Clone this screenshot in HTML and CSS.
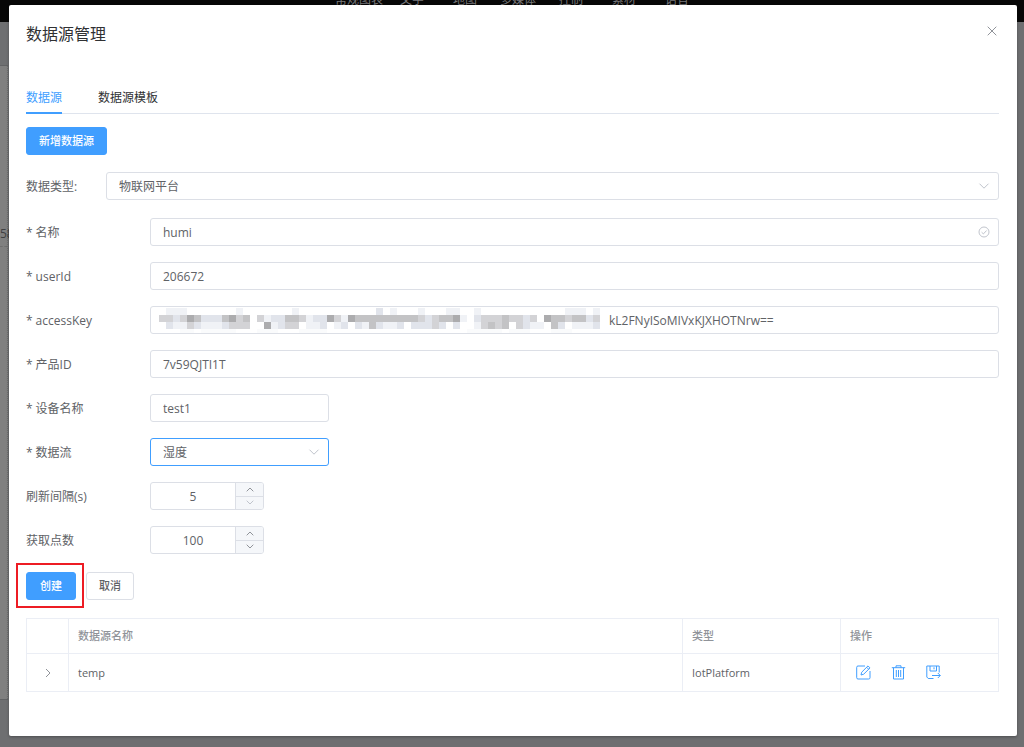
FILE: index.html
```html
<!DOCTYPE html>
<html lang="zh-CN">
<head>
<meta charset="utf-8">
<title>数据源管理</title>
<link rel="stylesheet" href="styles.css">
</head>
<body>
<div class="workspace" aria-hidden="true">
  <div class="topbar">
    <span>常规图表</span><span>文字</span><span>地图</span><span>多媒体</span><span>控制</span><span>素材</span><span>语音</span>
  </div>
  <div class="canvas">
    <div class="canvas-head"></div>
    <div class="canvas-body"><span class="canvas-value">58</span></div>
    <div class="canvas-foot"></div>
  </div>
</div>

<main class="dialog" role="dialog" aria-labelledby="dialog-title">
  <header class="dialog-header">
    <h1 class="dialog-title" id="dialog-title">数据源管理</h1>
    <button class="close" type="button" aria-label="关闭">
      <svg viewBox="0 0 10 10" width="10" height="10"><path d="M.7.7l8.6 8.6M9.3.7L.7 9.3"/></svg>
    </button>
  </header>

  <nav class="tabs">
    <button class="tab tab-active" type="button">数据源</button>
    <button class="tab" type="button">数据源模板</button>
  </nav>

  <button class="btn btn-primary" type="button">新增数据源</button>

  <form class="form">
    <div class="row row-type">
      <label for="type">数据类型:</label>
      <div class="field">
        <select id="type"><option>物联网平台</option></select>
        <svg class="field-icon" viewBox="0 0 12 12" width="12" height="12"><path d="M1.5 3.7L6 8.2l4.500-4.500"/></svg>
      </div>
    </div>
    <div class="row">
      <label class="required" for="name">名称</label>
      <div class="field">
        <input id="name" type="text" value="humi">
        <svg class="field-icon" viewBox="0 0 12 12" width="12" height="12"><circle cx="6" cy="6" r="5"/><path d="M3.600 6.200l1.800 1.700 3.200-3.400"/></svg>
      </div>
    </div>
    <div class="row">
      <label class="required" for="user">userId</label>
      <div class="field"><input id="user" type="text" value="206672"></div>
    </div>
    <div class="row">
      <label class="required" for="key">accessKey</label>
      <div class="field field-key">
        <svg class="mosaic" viewBox="0 0 64 4" width="448" height="28" preserveAspectRatio="none">
          <path stroke="#f0f2f6" d="M1 .5h3M11 .5h1M19 .5h1M33 .5h1M37 .5h1M41 .5h2M45 .5h1M58 .5h3M62 .5h1M15 1.500h1M21 1.500h1M26 1.500h1M43 1.500h1M2 2.500h2M6 2.500h3M15 2.500h2M21 2.500h3M25 2.500h1M28 2.500h2M32 2.500h3M45 2.500h2M53 2.500h2M56 2.500h1M59 2.500h4"/>
          <path stroke="#fafbfc" d="M3 3.500h2M6 3.500h5M14 3.500h3M20 3.500h4M44 3.500h5M50 3.500h3M56 3.500h3"/>
          <path stroke="#e1e4eb" d="M31 .5h1M2 1.500h1M6 1.500h3M16 1.500h2M22 1.500h2M38 1.500h1M45 1.500h1M52 1.500h1M61 1.500h1M1 2.500h1M5 2.500h1M9 2.500h1M17 2.500h1M23 2.500h1M26 2.500h1M28 2.500h1M31 2.500h1M34 2.500h1M36 2.500h3M40 2.500h1M42 2.500h1M52 2.500h1M57 2.500h1M62 2.500h1"/>
          <path stroke="#d3d3d6" d="M0 1.500h2M3 1.500h1M11 1.500h1M14 1.500h1M20 1.500h1M25 1.500h1M37 1.500h1M39 1.500h1M46 1.500h3M50 1.500h2M53 1.500h1M58 1.500h1M62 1.500h1M4 2.500h1M10 2.500h3M18 2.500h2M39 2.500h1M46 2.500h1M48 2.500h1M51 2.500h1"/>
          <path stroke="#c3c3c5" d="M5 1.500h1M9 1.500h1M12 1.500h1M18 1.500h2M28 1.500h9M40 1.500h2M49 1.500h1M56 1.500h2M59 1.500h2M30 2.500h1M47 2.500h1M49 2.500h1M56 2.500h1"/>
          <path stroke="#acacae" d="M4 1.500h1M10 1.500h1M24 1.500h1M27 1.500h1M42 1.500h1M55 1.500h1M15 2.500h1"/>
        </svg>
        <input id="key" type="text" value="kL2FNyISoMIVxKJXHOTNrw==">
      </div>
    </div>
    <div class="row">
      <label class="required" for="product">产品ID</label>
      <div class="field"><input id="product" type="text" value="7v59QJTI1T"></div>
    </div>
    <div class="row">
      <label class="required" for="device">设备名称</label>
      <div class="field field-short"><input id="device" type="text" value="test1"></div>
    </div>
    <div class="row">
      <label class="required" for="stream">数据流</label>
      <div class="field field-short field-focus">
        <select id="stream"><option>湿度</option></select>
        <svg class="field-icon" viewBox="0 0 12 12" width="12" height="12"><path d="M1.500 3.700L6 8.200l4.500-4.500"/></svg>
      </div>
    </div>
    <div class="row">
      <label for="interval">刷新间隔(s)</label>
      <div class="field stepper">
        <input id="interval" type="text" inputmode="numeric" value="5">
        <div class="steps">
          <button type="button" aria-label="增加"><svg viewBox="0 0 8 5" width="8" height="5"><path d="M.7 4.300L4 1l3.300 3.300"/></svg></button>
          <button type="button" aria-label="减少" disabled><svg viewBox="0 0 8 5" width="8" height="5"><path d="M.7.7L4 4 7.300.7"/></svg></button>
        </div>
      </div>
    </div>
    <div class="row">
      <label for="points">获取点数</label>
      <div class="field stepper">
        <input id="points" type="text" inputmode="numeric" value="100">
        <div class="steps">
          <button type="button" aria-label="增加"><svg viewBox="0 0 8 5" width="8" height="5"><path d="M.7 4.300L4 1l3.300 3.300"/></svg></button>
          <button type="button" aria-label="减少"><svg viewBox="0 0 8 5" width="8" height="5"><path d="M.7.7L4 4 7.300.7"/></svg></button>
        </div>
      </div>
    </div>
    <div class="actions">
      <div class="highlight"><button class="btn btn-primary" type="button">创建</button></div>
      <button class="btn" type="button">取消</button>
    </div>
  </form>

  <table class="sources">
    <colgroup><col class="col-expand"><col><col class="col-type"><col class="col-ops"></colgroup>
    <thead>
      <tr><th></th><th>数据源名称</th><th>类型</th><th>操作</th></tr>
    </thead>
    <tbody>
      <tr>
        <td class="expand"><button type="button" aria-label="展开"><svg viewBox="0 0 6 10" width="6" height="10"><path d="M1 1l4 4-4 4"/></svg></button></td>
        <td>temp</td>
        <td>IotPlatform</td>
        <td>
          <div class="ops">
            <button type="button" aria-label="编辑"><svg viewBox="0 0 15 15" width="15" height="15"><path d="M9 1H2Q.7 1 .7 2.300v10.400Q.7 14 2 14h10.700q1.300 0 1.300-1.300V6M5 10l.7-2.800L12 .9l2 2-6.300 6.300zM10.700 2.300l2 2"/></svg></button>
            <button type="button" aria-label="删除"><svg viewBox="0 0 15 15" width="15" height="15"><path d="M.8 2.700h13.400M5 2.700V.8h5v1.900M2.500 2.700V14h10V2.700M5.300 5v7M7.500 5v7M9.700 5v7"/></svg></button>
            <button type="button" aria-label="导出"><svg viewBox="0 0 15 15" width="15" height="15"><path d="M7.500 13.500H2.200L.8 12V1h12.400v6.500M4 1v5h6.500V1M8 2.300v2M6 10.500h8.200M11.800 8l2.500 2.500-2.500 2.500"/></svg></button>
          </div>
        </td>
      </tr>
    </tbody>
  </table>
</main>
</body>
</html>
```
FILE: styles.css
```css
* { box-sizing: border-box; }

body {
  margin: 0;
  min-height: 100vh;
  padding: 5px 7px 12px 9px;
  background: #6e6f71;
  color: #606266;
  font: 12px/20px "Open Sans", "Noto Sans CJK SC", sans-serif;
}

button, input, select { font: inherit; color: inherit; margin: 0; }
button { padding: 0; border: 0; background: none; }
svg { display: block; fill: none; stroke: currentColor; }

/* Dimmed editor behind the dialog */
.workspace {
  position: absolute;
  inset: 0;
  display: flex;
  flex-direction: column;
  overflow: hidden;
}
.topbar {
  display: grid;
  grid-template-columns: repeat(7, 53px);
  justify-content: center;
  height: 22px;
  padding-left: 12px;
  background: #070707;
  color: #77777a;
  font-size: 12px;
  line-height: 0;
  text-align: center;
}
.canvas { flex: 1; display: flex; flex-direction: column; width: 8px; }
.canvas-head { height: 44px; border-bottom: 1px solid #626365; }
.canvas-body { flex: 1; padding-top: 156px; background: #808080; border-right: 1px dotted #6e6e6e; }
.canvas-value { display: block; border-bottom: 1px dashed #6e6e6e; color: #404143; line-height: 24px; }
.canvas-foot { height: 48px; border-top: 1px solid #626365; }

.dialog {
  position: relative;
  padding: 17px 18px 44px 17px;
  background: #fff;
  border-radius: 2px;
  box-shadow: 0 1px 3px rgba(0, 0, 0, .3);
}
.dialog-header {
  display: flex;
  justify-content: space-between;
  align-items: flex-start;
  margin-bottom: 34px;
}
.dialog-title { margin: 0; font-size: 16px; line-height: 24px; font-weight: 400; color: #303133; }
.close { padding: 4px 2px; color: #909399; }

.tabs {
  display: flex;
  gap: 36px;
  margin-bottom: 13px;
  box-shadow: inset 0 -1px #dfe4ed;
}
.tab { height: 34px; padding-top: 2px; color: #303133; border-bottom: 2px solid transparent; border-top: 2px solid transparent; }
.tab-active { color: #409eff; border-bottom-color: #409eff; }

.btn {
  height: 28px;
  padding: 0 12px;
  border: 1px solid #dcdfe6;
  border-radius: 3px;
  background: #fff;
  font-size: 11px;
  font-weight: 500;
}
.btn-primary { background: #409eff; border-color: #409eff; color: #fff; }

.form { display: grid; gap: 16px; margin-top: 17px; }
.row { display: grid; grid-template-columns: 124px minmax(0, 1fr); align-items: center; }
.row-type { grid-template-columns: 80px minmax(0, 1fr); margin-bottom: 2px; }
.row label { padding-top: 2px; }
.required::before { content: "*"; margin-right: 3px; }

.field {
  display: flex;
  align-items: center;
  height: 28px;
  border: 1px solid #dcdfe6;
  border-radius: 3px;
  background: #fff;
  overflow: hidden;
}
.field-short { width: 179px; }
.field-focus { border-color: #409eff; }
.field input, .field select {
  flex: 1;
  min-width: 0;
  height: 100%;
  padding: 0 12px;
  border: 0;
  outline: 0;
  background: none;
  appearance: none;
}
.field select { padding-top: 2px; }
.field-icon { flex: none; margin-right: 8px; color: #c0c4cc; }
.mosaic { flex: none; align-self: flex-start; margin: 1px 2px 0 8px; }
.mosaic path { stroke-width: 1; }
.field-key input { padding: 0; }

.stepper { width: 114px; }
.stepper input { text-align: center; padding: 0; }
.steps { display: grid; width: 28px; height: 100%; border-left: 1px solid #dcdfe6; background: #f5f7fa; }
.steps button { display: grid; place-items: center; color: #909399; }
.steps button + button { border-top: 1px solid #dcdfe6; }
.steps button:disabled { color: #c0c4cc; }

.actions { display: flex; gap: 10px; margin-top: 2px; }
.highlight { position: relative; }
.highlight .btn { padding: 0 13px; }
.highlight::after {
  content: "";
  position: absolute;
  inset: -9px -8px -8px -10px;
  border: 2px solid #ed1c24;
  pointer-events: none;
}

.sources {
  width: 100%;
  margin-top: 18px;
  table-layout: fixed;
  border-collapse: collapse;
  font-size: 11px;
}
.col-expand { width: 42px; }
.col-type { width: 158px; }
.col-ops { width: 158px; }
.sources th, .sources td { height: 35px; padding: 0 9px; border: 1px solid #ebeef5; text-align: left; }
.sources th { color: #909399; font-weight: 500; }
.sources td { height: 38px; }
.sources .expand { padding: 0; }
.expand button { display: block; margin: 0 auto; color: #909399; }
.ops { display: flex; gap: 20px; padding-left: 6px; color: #409eff; }
```
